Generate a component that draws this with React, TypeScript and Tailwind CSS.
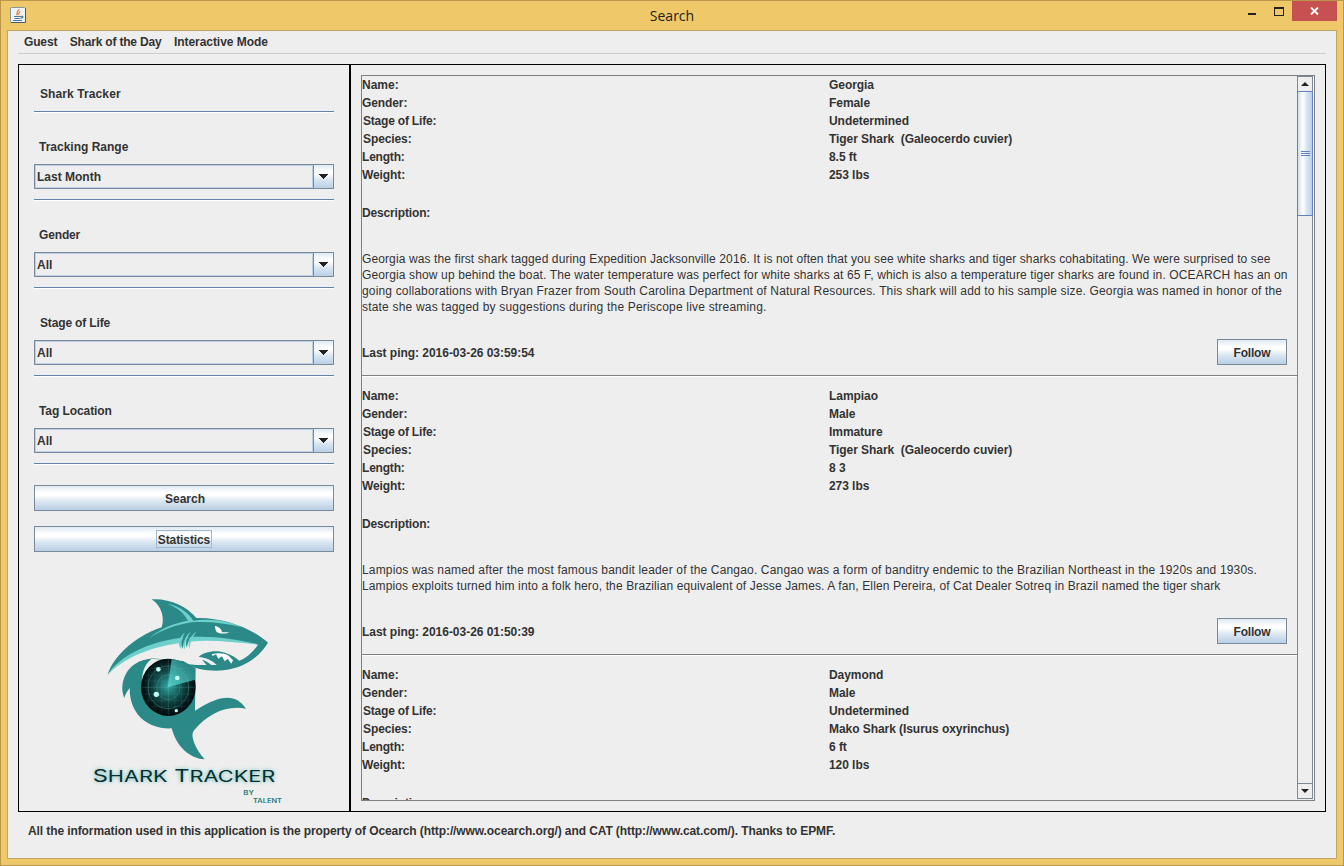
import React from "react";

const FILTERS = [
  { label: "Tracking Range", value: "Last Month", pad: "pl-[5px]" },
  { label: "Gender", value: "All", pad: "pl-[5px] tracking-[-0.15px]" },
  { label: "Stage of Life", value: "All", pad: "pl-[6px] tracking-[-0.15px]" },
  { label: "Tag Location", value: "All", pad: "pl-[5px] tracking-[-0.08px]" },
];

type Shark = { rows: [string, string][]; text: [string, string][]; ping: string };

const SHARKS: Shark[] = [
  {
    rows: [
      ["Name:", "Georgia"],
      ["Gender:", "Female"],
      ["Stage of Life:", "Undetermined"],
      ["Species:", "Tiger Shark  (Galeocerdo cuvier)"],
      ["Length:", "8.5 ft"],
      ["Weight:", "253 lbs"],
    ],
    text: [
      ["Georgia was the first shark tagged during Expedition Jacksonville 2016. It is not often that you see white sharks and tiger sharks cohabitating. We were surprised to see", "tracking-[0.108px]"],
      ["Georgia show up behind the boat. The water temperature was perfect for white sharks at 65 F, which is also a temperature tiger sharks are found in. OCEARCH has an on", "tracking-[0.134px]"],
      ["going collaborations with Bryan Frazer from South Carolina Department of Natural Resources. This shark will add to his sample size. Georgia was named in honor of the", "tracking-[0.157px]"],
      ["state she was tagged by suggestions during the Periscope live streaming.", "tracking-[0.19px]"],
    ],
    ping: "Last ping: 2016-03-26 03:59:54",
  },
  {
    rows: [
      ["Name:", "Lampiao"],
      ["Gender:", "Male"],
      ["Stage of Life:", "Immature"],
      ["Species:", "Tiger Shark  (Galeocerdo cuvier)"],
      ["Length:", "8 3"],
      ["Weight:", "273 lbs"],
    ],
    text: [
      ["Lampios was named after the most famous bandit leader of the Cangao. Cangao was a form of banditry endemic to the Brazilian Northeast in the 1920s and 1930s.", "tracking-[0.164px]"],
      ["Lampios exploits turned him into a folk hero, the Brazilian equivalent of Jesse James. A fan, Ellen Pereira, of Cat Dealer Sotreq in Brazil named the tiger shark", "tracking-[0.12px]"],
    ],
    ping: "Last ping: 2016-03-26 01:50:39",
  },
  {
    rows: [
      ["Name:", "Daymond"],
      ["Gender:", "Male"],
      ["Stage of Life:", "Undetermined"],
      ["Species:", "Mako Shark (Isurus oxyrinchus)"],
      ["Length:", "6 ft"],
      ["Weight:", "120 lbs"],
    ],
    text: [],
    ping: "",
  },
];

const KEY_TRACKING: Record<string, string> = {
  "Name:": "",
  "Gender:": "tracking-[-0.1px]",
  "Stage of Life:": "pl-[1px] tracking-[-0.2px]",
  "Species:": "pl-[1px] tracking-[-0.1px]",
  "Length:": "tracking-[-0.2px]",
  "Weight:": "tracking-[-0.1px]",
};

const METAL = "bg-[linear-gradient(to_bottom,#dfe9f3_0%,#ffffff_28%,#ffffff_38%,#dce7f2_62%,#b8cfe5_100%)]";

function Separator() {
  return <div className="h-[2px] w-[300px] border-t border-[#6382ab] bg-white" />;
}

function Combo({ value }: { value: string }) {
  return (
    <div className="flex h-[25px] w-[300px] border border-[#7a8a99]">
      <div className="flex flex-1 items-center border border-[#b8cfe5] pl-[1px]">{value}</div>
      <div className={`flex w-[20px] items-center justify-center border-l border-[#7a8a99] ${METAL}`}>
        <svg width="10" height="5" viewBox="0 0 10 5" className="-translate-x-px" shapeRendering="crispEdges">
          <path d="M0 0H10L5 5Z" fill="#222" />
        </svg>
      </div>
    </div>
  );
}

function Logo() {
  return (
    <svg width="210" height="225" viewBox="0 0 630 675">
      <defs>
        <radialGradient id="radar" cx="50%" cy="48%" r="52%">
          <stop offset="0" stopColor="#2fa7a3" />
          <stop offset="0.45" stopColor="#12504f" />
          <stop offset="0.85" stopColor="#031517" />
          <stop offset="1" stopColor="#010708" />
        </radialGradient>
        <linearGradient id="beam" x1="0" y1="1" x2="1" y2="0">
          <stop offset="0" stopColor="#5fdcd6" />
          <stop offset="1" stopColor="#23908c" />
        </linearGradient>
        <filter id="glow" x="-10%" y="-60%" width="120%" height="220%">
          <feGaussianBlur stdDeviation="6" />
        </filter>
      </defs>
      <path d="M215 220C160 226 126 262 127 315C128 325 130 332 133 339C136 328 142 318 149 309C148 385 200 433 275 430C288 480 325 521 374 523C345 490 330 452 341 437C385 385 440 360 498 371C470 328 425 324 345 377L347 250L310 228Z" fill="#2b8a88" />
      <path d="M83 268C105 235 150 200 225 170C320 150 400 152 535 178C515 205 500 220 478 228C440 190 385 195 358 215C370 222 375 230 380 238L340 241C310 222 250 212 215 220C150 232 105 246 83 268Z" fill="#eeeeee" />
      <path d="M215 221C190 240 184 270 186 303L200 290C205 262 222 235 250 224Z" fill="#eeeeee" />
      <path d="M83 269C98 220 155 158 245 127C255 95 243 62 215 43C265 39 322 64 349 99C425 96 515 128 564 173C543 205 508 247 430 256C390 260 345 252 318 237C340 240 360 240 380 240C372 230 366 226 368 224C376 227 385 232 394 240L410 240C402 231 388 220 356 215C380 196 430 187 478 227C500 218 518 202 534 179C470 165 400 155 335 163C250 170 145 190 83 269Z" fill="#2b8a88" />
      <path d="M83 269C120 212 205 171 300 159C390 148 470 164 536 178C460 173 395 162 330 170C235 180 145 206 83 269Z" fill="#6ed0cb" />
      <path d="M262 56C292 67 312 84 324 107C282 114 240 131 207 160C245 134 286 119 342 110C326 84 299 62 262 56Z" fill="#6ed0cb" />
      <path d="M334 108C400 98 450 109 485 127C440 115 390 109 334 112Z" fill="#6ed0cb" />
      <path d="M315 142C294 160 291 176 304 193C301 172 307 157 315 142ZM333 139C309 158 303 178 315 194C315 172 321 158 333 139ZM351 138C328 156 320 172 329 191C331 169 339 155 351 138Z" fill="#6ed0cb" />
      <path d="M325 143C305 158 299 174 308 192C309 170 316 158 325 143ZM343 140C322 155 313 171 321 189C323 168 331 154 343 140Z" fill="#2b8a88" />
      <path d="M405 122C418 126 425 132 426 142L448 142C438 147 420 147 410 141C407 136 405 129 405 122Z" fill="#fff" />
      <path d="M395 208C412 203 432 204 446 212L459 226L454 236L443 221L434 229L426 214L415 221L408 208L398 213Z" fill="#fff" />
      <ellipse cx="265" cy="307" rx="82" ry="86" fill="url(#radar)" />
      <path d="M263 307L275 222A82 86 0 0 1 345 284Z" fill="url(#beam)" opacity=".8" />
      <g fill="none" stroke="#78c9c4" strokeOpacity=".4" strokeWidth="2">
        <ellipse cx="265" cy="307" rx="35" ry="37" />
        <ellipse cx="265" cy="307" rx="61" ry="64" />
        <path strokeOpacity=".3" d="M265 222V392M184 307H346" />
        <path strokeOpacity=".15" d="M205 250H325M193 270H337M187 288H343M187 327H343M194 347H336M205 365H325M205 250V365M225 234V380M245 226V388M285 226V388M305 234V380M325 250V365" />
      </g>
      <g fill="#bdfcf7">
        <circle cx="235" cy="253" r="7" />
        <circle cx="292" cy="279" r="7" />
        <circle cx="229" cy="328" r="8" />
        <circle cx="289" cy="377" r="5" />
      </g>
      <g fontFamily="Inter, sans-serif">
        <text x="38" y="592" fontSize="50" fontWeight="500" textLength="548" lengthAdjust="spacingAndGlyphs" fill="#4fb5b1" opacity=".8" filter="url(#glow)">S<tspan fontSize="46">HARK</tspan> T<tspan fontSize="46">RACKER</tspan></text>
        <text x="38" y="590" fontSize="50" fontWeight="400" textLength="548" lengthAdjust="spacingAndGlyphs" fill="#06302f">S<tspan fontSize="46">HARK</tspan> T<tspan fontSize="46">RACKER</tspan></text>
        <text x="490" y="629" fontSize="17" fontWeight="600" textLength="32" lengthAdjust="spacingAndGlyphs" fill="#2b7a79">BY</text>
        <text x="519" y="655" fontSize="17" fontWeight="600" textLength="87" lengthAdjust="spacingAndGlyphs" fill="#2b7a79">TALENT</text>
      </g>
    </svg>
  );
}

function JavaIcon() {
  return (
    <svg width="16" height="16" viewBox="0 0 16 16">
      <rect x=".5" y=".5" width="15" height="15" rx="1" fill="#eef3f7" stroke="#8b979f" />
      <path d="M1 15.500H15.500V1" fill="none" stroke="#4b5c69" />
      <path d="M9.500 2.500C5.500 4.500 8.500 5.500 6.500 8.200M10.500 4.500C8 5.500 9.500 6.500 8.500 8" fill="none" stroke="#e0762c" strokeWidth="1.200" />
      <path d="M4 9.500H10.500M4.500 11.500H10M3 13.500H12M10.500 9.500C14 8.500 13.500 11 10.500 11.500" fill="none" stroke="#4d7896" strokeWidth="1.200" />
    </svg>
  );
}

function Entry({ shark }: { shark: Shark }) {
  return (
    <section className="shrink-0">
      {shark.rows.map(([k, v]) => (
        <div key={k} className="flex h-[18px] items-center">
          <span className={`w-[467px] ${KEY_TRACKING[k]}`}>{k}</span>
          <span className="whitespace-pre tracking-[-0.06px]">{v}</span>
        </div>
      ))}
      <div className="mt-5 flex h-[18px] items-center tracking-[-0.15px]">Description:</div>
      {shark.ping && (
        <>
          <div className="mt-[29px] font-normal">
            {shark.text.map(([line, tracking]) => (
              <div key={line} className={`h-4 whitespace-pre leading-4 ${tracking}`}>{line}</div>
            ))}
          </div>
          <div className="mt-6 flex h-[26px] items-center justify-between pr-[10px]">
            <span className="pt-[2px] tracking-[-0.03px]">{shark.ping}</span>
            <button className={`h-[26px] w-[70px] border border-[#7a8a99] pt-[2px] tracking-[-0.2px] ${METAL}`}>Follow</button>
          </div>
          <div className="mb-[10px] mt-[10px] h-[2px] border-t border-[#808080] bg-white" />
        </>
      )}
    </section>
  );
}

export default function App() {
  return (
    <div className="flex h-[866px] w-[1344px] flex-col overflow-hidden border border-[#b9964a] bg-[#efc869] font-['Liberation_Sans',Arial,sans-serif] text-[12px] font-bold leading-4 text-[#333]">
      <header className="flex h-[29px] shrink-0 items-start">
        <div className="flex w-[240px] pl-[9px] pt-[6px]"><JavaIcon /></div>
        <div className="flex-1 pl-[181px] text-center">
          <div className="w-[500px] pt-[5px] font-['Open_Sans',sans-serif] text-[14px] font-normal leading-5 text-[#222]">Search</div>
        </div>
        <div className="flex w-[95px] items-start">
          <svg width="44" height="20" viewBox="0 0 44 20" shapeRendering="crispEdges">
            <path d="M0 12h8v2H0zM26 6h10v9H26zM27 8v6h8V8z" fill="#222" fillRule="evenodd" />
          </svg>
          <div className="flex h-[20px] w-[45px] items-center justify-center bg-[#c75050]">
            <svg width="9" height="8" viewBox="0 0 9 8"><path d="M1 .5L8 7.500M8 .5L1 7.500" stroke="#fff" strokeWidth="1.800" /></svg>
          </div>
        </div>
      </header>
      <div className="mx-[6px] flex h-[829px] shrink-0 flex-col border border-[#c3a465] bg-[#eeeeee] px-[10px]">
        <nav className="flex h-[23px] shrink-0 gap-[12.500px] border-b border-[#cccccc] pl-[6px] pt-[3px]">
          <span className="tracking-[-0.15px]">Guest</span>
          <span className="tracking-[-0.19px]">Shark of the Day</span>
          <span className="tracking-[-0.05px]">Interactive Mode</span>
        </nav>
        <div className="mt-[10px] flex h-[748px] shrink-0">
          <aside className="flex w-[332px] shrink-0 flex-col border border-black pl-[15px]">
            <div className="mt-[21px] pl-[6px] tracking-[0.1px]">Shark Tracker</div>
            <div className="mt-[9px]"><Separator /></div>
            {FILTERS.map((f) => (
              <div key={f.label} className="mt-[26px]">
                <div className={f.pad}>{f.label}</div>
                <div className="mt-[9px]"><Combo value={f.value} /></div>
                <div className="mt-[10px]"><Separator /></div>
              </div>
            ))}
            <button className={`mt-[20px] h-[26px] w-[300px] shrink-0 border border-[#7a8a99] pl-[2px] pt-[2px] ${METAL}`}>Search</button>
            <button className={`mt-[15px] flex h-[26px] w-[300px] shrink-0 items-center justify-center border border-[#7a8a99] ${METAL}`}>
              <span className="h-[18px] border border-[#a3b8cc] px-[1px] pt-px tracking-[-0.1px]">Statistics</span>
            </button>
            <div className="ml-[46px] mt-[33px]"><Logo /></div>
          </aside>
          <main className="flex w-[976px] border border-black p-[10px]">
            <div className="flex w-[954px] border border-[#808080]">
              <div className="flex h-[724px] w-[935px] flex-col overflow-hidden">
                {SHARKS.map((s) => <Entry key={s.rows[0][1]} shark={s} />)}
              </div>
              <div className="flex h-[724px] w-[17px] border-r border-white pb-px">
                <div className="flex w-[16px] flex-col border-x border-[#7a8a99]">
                  <div className="flex h-[15px] items-center justify-center border-t border-[#7a8a99]">
                    <svg width="8" height="4" viewBox="0 0 8 4"><path d="M0 4H8L4 0Z" fill="#222" /></svg>
                  </div>
                  <div className="-mx-px flex h-[125px] flex-col items-center justify-center gap-px border border-[#6382bf] bg-[linear-gradient(to_right,#cfdfee,#ffffff_35%,#dce7f3_60%,#b8cfe5)]">
                    <i className="h-px w-[9px] bg-[#6382bf]" /><i className="h-px w-[9px] bg-[#6382bf]" /><i className="h-px w-[9px] bg-[#6382bf]" />
                  </div>
                  <div className="flex-1" />
                  <div className="flex h-[16px] items-center justify-center border-y border-[#7a8a99]">
                    <svg width="8" height="4" viewBox="0 0 8 4"><path d="M0 0H8L4 4Z" fill="#222" /></svg>
                  </div>
                </div>
              </div>
            </div>
          </main>
        </div>
        <footer className="flex pl-[10px] pt-[11px] tracking-[-0.096px]">All the information used in this application is the property of Ocearch (http://www.ocearch.org/) and CAT (http://www.cat.com/). Thanks to EPMF.</footer>
      </div>
    </div>
  );
}
